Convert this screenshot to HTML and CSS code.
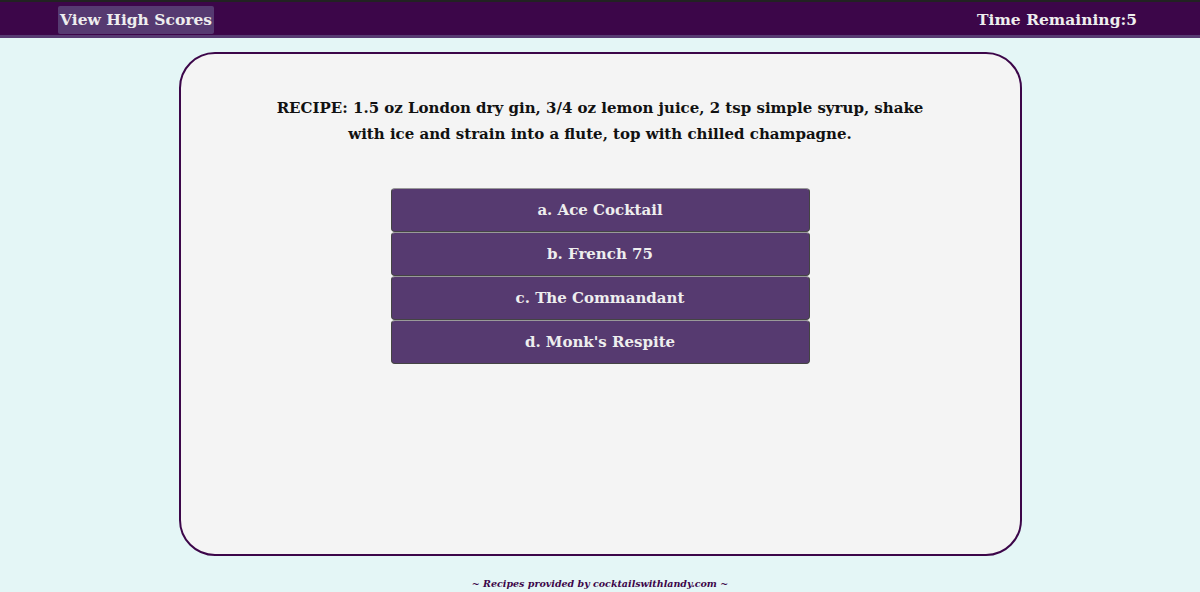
FILE: index.html
```html
<!DOCTYPE html>
<html lang="en">
<head>
<meta charset="utf-8">
<title>Cocktail Quiz</title>
<link rel="stylesheet" href="styles.css">
</head>
<body>
<header class="topbar">
  <a class="scores-link" href="#">View High Scores</a>
  <div class="timer">Time Remaining:<span>5</span></div>
</header>
<main class="quiz-card">
  <p class="question">RECIPE: 1.5 oz London dry gin, 3/4 oz lemon juice, 2 tsp simple syrup, shake with ice and strain into a flute, top with chilled champagne.</p>
  <div class="choices">
    <button class="choice">a. Ace Cocktail</button>
    <button class="choice">b. French 75</button>
    <button class="choice">c. The Commandant</button>
    <button class="choice">d. Monk's Respite</button>
  </div>
</main>
<footer class="credit">~ Recipes provided by cocktailswithlandy.com ~</footer>
</body>
</html>
```
FILE: styles.css
```css
html, body {
  margin: 0;
  padding: 0;
}
body {
  background: #e4f6f6;
  font-family: "DejaVu Serif", "Liberation Serif", serif;
  height: 592px;
  overflow: hidden;
}
.topbar {
  display: flex;
  justify-content: space-between;
  align-items: center;
  height: 33px;
  background: #3c0649;
  border-top: 2px solid #222;
  border-bottom: 3px solid #573b72;
  padding: 0 63px 0 58px;
}
.scores-link {
  display: block;
  background: #563a71;
  color: #eee;
  text-decoration: none;
  font-weight: bold;
  font-size: 15.5px;
  line-height: 28px;
  padding: 0 2px;
  border-radius: 2px;
  margin-top: 2px;
}
.timer {
  color: #eee;
  font-weight: bold;
  font-size: 15.5px;
  margin-top: 2px;
}
.quiz-card {
  width: 839px;
  height: 500px;
  margin: 14px auto 0;
  box-sizing: content-box;
  background: #f4f4f4;
  border: 2px solid #3c0649;
  border-radius: 36px;
  display: flex;
  flex-direction: column;
  align-items: center;
}
.question {
  width: 680px;
  margin: 41px 0 0;
  text-align: center;
  font-weight: bold;
  font-size: 15px;
  line-height: 26px;
  color: #111;
}
.choices {
  margin-top: 41px;
  display: flex;
  flex-direction: column;
  width: 419px;
}
.choice {
  height: 44px;
  background: #563a70;
  color: #eee;
  font-family: inherit;
  font-weight: bold;
  font-size: 15px;
  border: 1px solid #444;
  border-top-color: #999;
  border-radius: 4px;
  padding: 0;
  cursor: pointer;
}
.credit {
  text-align: center;
  font-style: italic;
  font-weight: bold;
  font-size: 9.5px;
  color: #3c0649;
  margin-top: 22px;
}
```
